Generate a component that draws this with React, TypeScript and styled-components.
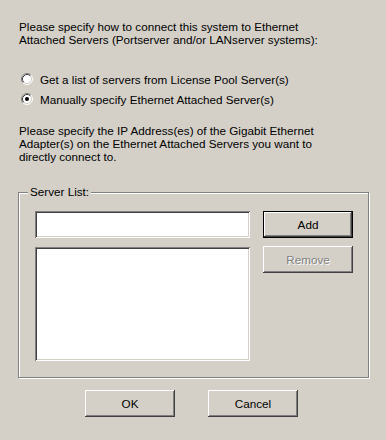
import React, { useState } from "react";
import styled, { createGlobalStyle } from "styled-components";

const GlobalStyle = createGlobalStyle`
  html, body {
    margin: 0;
    padding: 0;
    background: #d4d0c8;
  }
  body {
    font-family: "Liberation Sans", Arial, sans-serif;
    font-size: 11.7px;
    color: #000;
  }
`;

const Dialog = styled.div`
  width: 386px;
  height: 440px;
  box-sizing: border-box;
  padding: 20px 17px 0 19px;
  background: #d4d0c8;
`;

const Text = styled.p<{ $top?: number }>`
  margin: ${(p) => p.$top ?? 0}px 0 0 0;
  line-height: 13px;
  white-space: nowrap;
`;

const RadioGroup = styled.div`
  margin-top: 23px;
  display: flex;
  flex-direction: column;
`;

const RadioRow = styled.label`
  height: 20px;
  display: flex;
  align-items: center;
  gap: 7px;
  padding-left: 2px;
  cursor: default;
`;

// etched frame with a caption sitting over the top line
const GroupBox = styled.div`
  position: relative;
  margin: 29px 0 0 -1px;
  border: 1px solid #808080;
  box-shadow: inset 1px 1px 0 #fff, 1px 1px 0 #fff;
  padding: 18px 15px 16px 16px;
  display: flex;
  gap: 13px;
`;

const Caption = styled.span`
  position: absolute;
  top: -8px;
  left: 9px;
  padding: 0 2px;
  line-height: 13px;
  background: #d4d0c8;
`;

const Column = styled.div<{ $width: number; $gap: number }>`
  width: ${(p) => p.$width}px;
  display: flex;
  flex-direction: column;
  gap: ${(p) => p.$gap}px;
`;

const Sunken = styled.div<{ $height: number }>`
  height: ${(p) => p.$height}px;
  background: #fff;
  box-shadow: inset 1px 1px 0 #808080, inset -1px -1px 0 #fff,
    inset 2px 2px 0 #404040, inset -2px -2px 0 #d4d0c8;
`;

const Field = styled.input`
  width: 100%;
  height: 27px;
  box-sizing: border-box;
  border: none;
  outline: none;
  padding: 3px 4px;
  font: inherit;
  background: #fff;
  box-shadow: inset 1px 1px 0 #808080, inset -1px -1px 0 #fff,
    inset 2px 2px 0 #404040, inset -2px -2px 0 #d4d0c8;
`;

const Button = styled.button<{ $default?: boolean }>`
  width: 90px;
  height: 27px;
  box-sizing: border-box;
  padding: 0;
  font-family: inherit;
  font-size: inherit;
  font-weight: normal;
  color: #000;
  background: #d4d0c8;
  border: ${(p) => (p.$default ? "1px solid #000" : "none")};
  box-shadow: inset -1px -1px 0 #404040, inset 1px 1px 0 #fff,
    inset -2px -2px 0 #808080, inset 2px 2px 0 #d4d0c8;
  &:disabled {
    color: #808080;
    text-shadow: 1px 1px 0 #fff;
  }
`;

const ButtonRow = styled.div`
  margin-top: 12px;
  padding-left: 66px;
  display: flex;
  gap: 33px;
`;

const Radio: React.FC<{ checked: boolean }> = ({ checked }) => (
  <svg width="12" height="12" viewBox="0 0 12 12">
    <circle cx="6" cy="6" r="5" fill="#fff" />
    <path d="M9.89 2.11A5.5 5.5 0 0 0 2.11 9.89" fill="none" stroke="#808080" />
    <path d="M2.11 9.89A5.5 5.5 0 0 0 9.89 2.11" fill="none" stroke="#fff" />
    <path d="M9.18 2.82A4.5 4.5 0 0 0 2.82 9.18" fill="none" stroke="#404040" />
    <path d="M2.82 9.18A4.5 4.5 0 0 0 9.18 2.82" fill="none" stroke="#d4d0c8" />
    {checked && <circle cx="6" cy="6" r="2" fill="#000" />}
  </svg>
);

const App: React.FC = () => {
  const [mode, setMode] = useState("manual");

  return (
    <Dialog>
      <GlobalStyle />
      <Text>
        Please specify how to connect this system to Ethernet
        <br />
        Attached Servers (Portserver and/or LANserver systems):
      </Text>
      <RadioGroup>
        <RadioRow onClick={() => setMode("pool")}>
          <Radio checked={mode === "pool"} />
          Get a list of servers from License Pool Server(s)
        </RadioRow>
        <RadioRow onClick={() => setMode("manual")}>
          <Radio checked={mode === "manual"} />
          Manually specify Ethernet Attached Server(s)
        </RadioRow>
      </RadioGroup>
      <Text $top={15}>
        Please specify the IP Address(es) of the Gigabit Ethernet
        <br />
        Adapter(s) on the Ethernet Attached Servers you want to
        <br />
        directly connect to.
      </Text>
      <GroupBox>
        <Caption>Server List:</Caption>
        <Column $width={215} $gap={9}>
          <Field />
          <Sunken $height={114} />
        </Column>
        <Column $width={90} $gap={8}>
          <Button $default>Add</Button>
          <Button disabled>Remove</Button>
        </Column>
      </GroupBox>
      <ButtonRow>
        <Button>OK</Button>
        <Button>Cancel</Button>
      </ButtonRow>
    </Dialog>
  );
};

export default App;
